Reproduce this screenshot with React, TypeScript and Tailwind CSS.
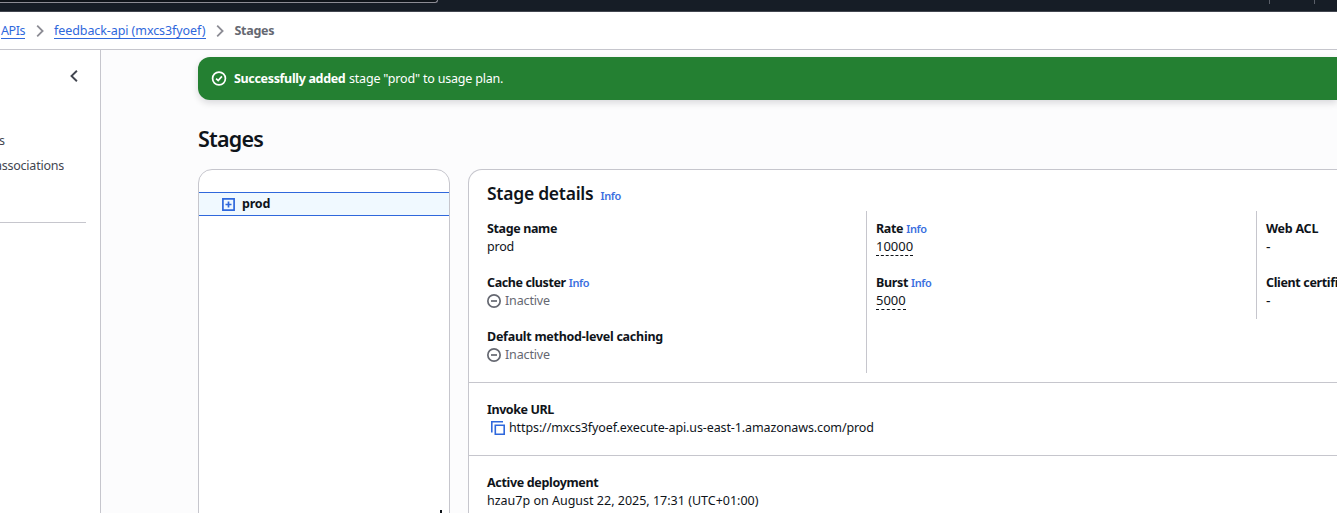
import type { ReactNode } from "react";

function ChevronRight() {
  return (
    <svg className="size-[14px] shrink-0" viewBox="0 0 14 14" fill="none" stroke="#8c8c94" strokeWidth="1.8">
      <path d="M4.2 1.7 9.6 7l-5.4 5.3" />
    </svg>
  );
}

function SuccessIcon() {
  return (
    <svg className="size-4 shrink-0" viewBox="0 0 16 16" fill="none" stroke="#fff" strokeWidth="1.7">
      <circle cx="8" cy="7.5" r="6.4" />
      <path d="m5.1 7.6 2.1 2 3.7-4.2" />
    </svg>
  );
}

function InactiveIcon() {
  return (
    <svg className="size-[14px] shrink-0" viewBox="0 0 14 14" fill="none" stroke="#656871" strokeWidth="1.7">
      <circle cx="7" cy="7" r="6.15" />
      <path d="M4 7h6" />
    </svg>
  );
}

function CopyIcon() {
  return (
    <svg className="size-[14px] shrink-0" viewBox="0 0 14 14" fill="none" stroke="#2f68dc" strokeWidth="1.6">
      <path d="M.8 11.5V.8H12" />
      <path d="M4.3 4.3h8.9v8.9H4.3z" />
    </svg>
  );
}

function ExpandIcon() {
  return (
    <svg className="size-[13px] shrink-0" viewBox="0 0 13 13" fill="none" stroke="#2f68dc" strokeWidth="1.7">
      <path d="M.9.9h11.2v11.2H.9zM3.5 6.5h6M6.5 3.5v6" />
    </svg>
  );
}

function Info() {
  return <a className="text-[11px] font-semibold tracking-[-0.35px] text-[#3b6fe0]">Info</a>;
}

function Field({ label, info, children }: { label: ReactNode; info?: boolean; children: ReactNode }) {
  return (
    <div className="h-9 whitespace-nowrap">
      <div className="flex h-[18px] items-baseline gap-[3px] font-bold">
        {label}
        {info && <Info />}
      </div>
      <div className="flex h-[18px] items-center">{children}</div>
    </div>
  );
}

function Inactive() {
  return (
    <span className="flex items-center gap-1 tracking-[-0.15px] text-[#656871]">
      <InactiveIcon />
      Inactive
    </span>
  );
}

function Editable({ children }: { children: ReactNode }) {
  return (
    <span className="h-[18px] border-b border-dashed border-[#0f141a] text-[13px] leading-4">{children}</span>
  );
}

export default function App() {
  return (
    <div className="flex h-[513px] w-[1337px] flex-col overflow-hidden bg-[#fcfcfd] font-['Noto_Sans',sans-serif] text-[12.5px] leading-[18px] text-[#0f141a]">
      <header className="flex h-3 shrink-0 justify-between border-b border-[#424650] bg-[#161d26]">
        <div className="h-[3px] w-[438px] rounded-br-[5px] border-r border-b border-[#8c8c94] bg-[#0f141a]" />
        <div className="flex h-1 w-[68px] gap-11">
          <div className="w-px bg-[#5a5f69]" />
          <div className="w-px bg-[#5a5f69]" />
        </div>
      </header>

      <nav className="flex h-[38px] shrink-0 items-center border-b border-[#c6c6cd] bg-white pl-px whitespace-nowrap">
        <a className="h-4 w-6 border-b border-[#2f68dc] leading-[15px] tracking-[-0.4px] text-[#2f68dc]">APIs</a>
        <span className="flex w-[29px] justify-center pl-px">
          <ChevronRight />
        </span>
        <a className="h-4 w-[152px] border-b border-[#2f68dc] leading-[15px] tracking-[-0.08px] text-[#2f68dc]">
          feedback-api (mxcs3fyoef)
        </a>
        <span className="flex w-[28px] justify-center">
          <ChevronRight />
        </span>
        <span className="pl-[0.5px] font-bold tracking-[-0.3px] text-[#656871]">Stages</span>
      </nav>

      <div className="flex min-h-0 flex-1">
        <aside className="w-[101px] shrink-0 border-r border-[#c6c6cd] bg-white">
          <div className="flex justify-end pt-[19px] pr-[19px]">
            <svg className="size-[14px]" viewBox="0 0 14 14" fill="none" stroke="#424650" strokeWidth="1.9">
              <path d="M9.9 1.7 4.5 7l5.4 5.3" />
            </svg>
          </div>
          <div className="flex w-16 flex-col items-end gap-[7px] overflow-hidden pt-[49px] tracking-[-0.23px] whitespace-nowrap text-[#424650]">
            <span className="w-full -indent-[1px]">s</span>
            <span>associations</span>
          </div>
          <div className="mt-[47px] mr-[14px] border-t border-[#c6c6cd]" />
        </aside>

        <main className="flex min-w-0 flex-1 flex-col pt-[7px] pl-[97px]">
          <div className="flex h-[43px] shrink-0 items-center rounded-l-xl bg-[#248032] pl-[13px] whitespace-nowrap text-white shadow-[0_3px_7px_rgba(0,7,22,0.14)]">
            <SuccessIcon />
            <span className="ml-[7px] font-bold tracking-[-0.33px]">Successfully added</span>
            <span className="ml-[3.5px] tracking-[-0.19px]">stage "prod" to usage plan.</span>
          </div>

          <h1 className="mt-[25px] text-[21.5px] leading-[27px] font-semibold tracking-[-0.8px]">Stages</h1>

          <div className="mt-[17px] flex min-h-0 flex-1 gap-[18px]">
            <section className="flex h-[400px] w-[252px] shrink-0 flex-col rounded-t-[14px] border border-[#c6c6cd] bg-white pt-[22px]">
              <div className="flex h-6 items-center gap-[7.5px] border-y border-[#2f68dc] bg-[#f0f9ff] pl-[22.5px] font-bold tracking-[-0.2px]">
                <ExpandIcon />
                prod
              </div>
              <div className="mt-[294px] mr-[7px] h-[3px] w-0.5 self-end bg-[#0f141a]" />
            </section>

            <section className="h-[400px] min-w-0 flex-1 overflow-hidden rounded-tl-[14px] border-t border-l border-[#c6c6cd] bg-white">
              <div className="flex items-baseline gap-[7px] pt-3 pl-[18px]">
                <h2 className="text-[17.5px] leading-[22px] font-semibold tracking-[-0.26px]">Stage details</h2>
                <Info />
              </div>

              <div className="flex h-[178px] items-start border-b border-[#c6c6cd] pt-[6px] pl-[18px]">
                <div className="flex w-[379px] shrink-0 flex-col gap-[18px] pt-[9px]">
                  <Field label={<span className="tracking-[-0.37px]">Stage name</span>}>
                    <span className="tracking-[-0.2px]">prod</span>
                  </Field>
                  <Field label={<span className="tracking-[-0.4px]">Cache cluster</span>} info>
                    <Inactive />
                  </Field>
                  <Field label={<span className="tracking-[-0.26px]">Default method-level caching</span>}>
                    <Inactive />
                  </Field>
                </div>
                <div className="flex h-[162px] w-[390px] shrink-0 flex-col gap-[18px] border-l border-[#c6c6cd] pt-[9px] pl-[9px]">
                  <Field label={<span className="tracking-[-0.35px]">Rate</span>} info>
                    <Editable>10000</Editable>
                  </Field>
                  <Field label={<span className="tracking-[-0.35px]">Burst</span>} info>
                    <Editable>5000</Editable>
                  </Field>
                </div>
                <div className="flex h-[108px] w-[390px] shrink-0 flex-col gap-[18px] border-l border-[#c6c6cd] pt-[9px] pl-[9px]">
                  <Field label={<span className="tracking-[-0.25px]">Web ACL</span>}>
                    <span className="text-sm">-</span>
                  </Field>
                  <Field label={<span className="tracking-[-0.35px]">Client certificate</span>}>
                    <span className="text-sm">-</span>
                  </Field>
                </div>
              </div>

              <div className="h-[73px] border-b border-[#c6c6cd] pt-[18px] pl-[18px]">
                <Field label={<span className="tracking-[-0.42px]">Invoke URL</span>}>
                  <span className="flex items-center gap-1 pl-1 tracking-[-0.11px]">
                    <CopyIcon />
                    https://mxcs3fyoef.execute-api.us-east-1.amazonaws.com/prod
                  </span>
                </Field>
              </div>

              <div className="pt-[18px] pl-[18px]">
                <Field label={<span className="tracking-[-0.33px]">Active deployment</span>}>
                  hzau7p on August 22, 2025, 17:31 (UTC+01:00)
                </Field>
              </div>
            </section>
          </div>
        </main>
      </div>
    </div>
  );
}
